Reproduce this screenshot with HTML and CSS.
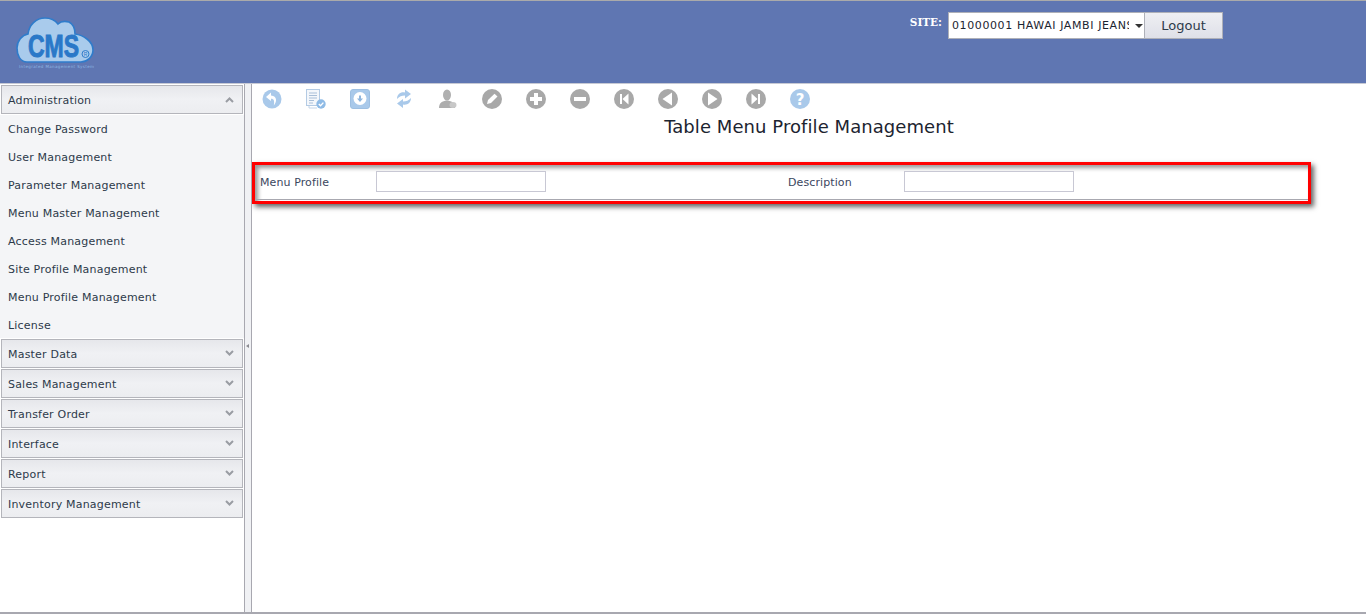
FILE: index.html
```html
<!DOCTYPE html>
<html lang="en">
<head>
    <meta charset="UTF-8">
    <meta name="viewport" content="width=device-width, initial-scale=1.0">
    <title>Table Menu Profile Management</title>
    <link rel="stylesheet" href="styles.css">
</head>
<body>

<div class="header">
    <svg class="logo" width="80" height="58" viewBox="0 0 80 58">
        <path d="M12 45 C5 45 2 38 2 31 C2 24 7 18 13 17 C14 8 21 1 30 1 C36 1 40 3 43 7 C46 4 50 4 54 5 C58 7 60 12 60 17 C68 18 78 24 78 33 C78 40 72 45 66 45 Z" fill="#a9cbec" stroke="#2f7ccb" stroke-width="1.6"/>
        <text class="logo-text" transform="translate(13 40) scale(1 1.35)">CMS</text>
        <circle cx="70.5" cy="37" r="3.5" fill="none" stroke="#2f7ccb" stroke-width="1"/>
        <text class="logo-reg" x="70.5" y="39">R</text>
        <text class="logo-sub" x="4" y="51" textLength="75" lengthAdjust="spacing">Integrated Management System</text>
    </svg>
    <div class="site-box">
        <span class="site-label">SITE:</span>
        <div class="site-select">
            <select>
                <option>01000001 HAWAI JAMBI JEANS STORE</option>
            </select>
        </div>
        <button class="logout">Logout</button>
    </div>
</div>

<div class="main">
    <div class="sidebar">
        <div class="acc-head">Administration <svg class="chev" width="9" height="7" viewBox="0 0 9 7"><path d="M1 6 L4.5 2.5 L8 6" fill="none" stroke="#9a9da3" stroke-width="2"/></svg></div>
        <ul class="acc-list">
            <li>Change Password</li>
            <li>User Management</li>
            <li>Parameter Management</li>
            <li>Menu Master Management</li>
            <li>Access Management</li>
            <li>Site Profile Management</li>
            <li>Menu Profile Management</li>
            <li>License</li>
        </ul>
        <div class="acc-head">Master Data <svg class="chev" width="9" height="7" viewBox="0 0 9 7"><path d="M1 1 L4.5 4.5 L8 1" fill="none" stroke="#9a9da3" stroke-width="2"/></svg></div>
        <div class="acc-head">Sales Management <svg class="chev" width="9" height="7" viewBox="0 0 9 7"><path d="M1 1 L4.5 4.5 L8 1" fill="none" stroke="#9a9da3" stroke-width="2"/></svg></div>
        <div class="acc-head">Transfer Order <svg class="chev" width="9" height="7" viewBox="0 0 9 7"><path d="M1 1 L4.5 4.5 L8 1" fill="none" stroke="#9a9da3" stroke-width="2"/></svg></div>
        <div class="acc-head">Interface <svg class="chev" width="9" height="7" viewBox="0 0 9 7"><path d="M1 1 L4.5 4.5 L8 1" fill="none" stroke="#9a9da3" stroke-width="2"/></svg></div>
        <div class="acc-head">Report <svg class="chev" width="9" height="7" viewBox="0 0 9 7"><path d="M1 1 L4.5 4.5 L8 1" fill="none" stroke="#9a9da3" stroke-width="2"/></svg></div>
        <div class="acc-head">Inventory Management <svg class="chev" width="9" height="7" viewBox="0 0 9 7"><path d="M1 1 L4.5 4.5 L8 1" fill="none" stroke="#9a9da3" stroke-width="2"/></svg></div>
    </div>

    <div class="splitter"><span class="split-arrow"></span></div>

    <div class="content">
        <div class="toolbar">
            <!-- back -->
            <svg width="20" height="20" viewBox="0 0 20 20"><circle cx="10" cy="10" r="9.5" fill="#a9c9ea"/><path d="M9 3.5 L4 8 L9 12 V9.8 C11.5 9.6 12.8 11.5 11.8 16.5 C15 13 15.5 7 9 6.5 Z" fill="#fff"/></svg>
            <!-- document check -->
            <svg width="20" height="20" viewBox="0 0 20 20"><rect x="0.5" y="0.5" width="13" height="16" fill="#f4f7fb" stroke="#b4cbe4"/><path d="M3 4 H11 M3 6.5 H11 M3 9 H11 M3 11.5 H8 M3 14 H7" stroke="#a9bfd8"/><path d="M3 17 V19 H11" fill="none" stroke="#c3d4e8"/><circle cx="15" cy="15" r="4.7" fill="#8fbbe6"/><path d="M12.8 15 L14.5 16.8 L17.4 13.6" fill="none" stroke="#fff" stroke-width="1.4"/></svg>
            <!-- save -->
            <svg width="20" height="20" viewBox="0 0 20 20"><rect x="0.5" y="0.5" width="19" height="19" rx="2.5" fill="#a9c9ea" stroke="#9dbfe2"/><circle cx="10" cy="9.5" r="6.5" fill="#fff"/><path d="M9 6.5 H11 V9.5 H13 L10 13 L7 9.5 H9 Z" fill="#8fb6de"/></svg>
            <!-- refresh -->
            <svg width="20" height="20" viewBox="0 0 20 20"><path d="M3 10 C3 5 7 2.5 11 3.5 V0.5 L17 5 L11 9.5 V6.5 C8 6.5 5 7.5 3 10 Z" fill="#a9c9ea"/><path d="M17 9 C17 14 13 16.5 9 15.5 V19 L3 14.5 L9 10 V12.5 C12 12.5 15 11.5 17 9 Z" fill="#a9c9ea"/></svg>
            <!-- user -->
            <svg width="20" height="20" viewBox="0 0 20 20"><ellipse cx="9" cy="6" rx="4" ry="5.5" fill="#b0b0b0"/><path d="M1 19 C1 14 4 12 9 11.5 C14 12 17 14 17 19 Z" fill="#adadad"/><ellipse cx="15" cy="16" rx="3.5" ry="3" fill="#c8c8c8"/></svg>
            <!-- edit -->
            <svg width="20" height="20" viewBox="0 0 20 20"><circle cx="10" cy="10" r="10" fill="#a8a8a8"/><path d="M5 15 L6 11 L12.5 4.7 L15.5 7.5 L9 14 Z" fill="#fff"/></svg>
            <!-- add -->
            <svg width="20" height="20" viewBox="0 0 20 20"><circle cx="10" cy="10" r="10" fill="#a8a8a8"/><path d="M8 4 H12 V8 H16 V12 H12 V16 H8 V12 H4 V8 H8 Z" fill="#fff"/></svg>
            <!-- remove -->
            <svg width="20" height="20" viewBox="0 0 20 20"><circle cx="10" cy="10" r="10" fill="#a8a8a8"/><rect x="4" y="8" width="12" height="4" fill="#fff"/></svg>
            <!-- first -->
            <svg width="20" height="20" viewBox="0 0 20 20"><circle cx="10" cy="10" r="10" fill="#a8a8a8"/><path d="M6 5 H8 V15 H6 Z M14.5 4.5 V15.5 L8.5 10 Z" fill="#fff"/></svg>
            <!-- prev -->
            <svg width="20" height="20" viewBox="0 0 20 20"><circle cx="10" cy="10" r="10" fill="#a8a8a8"/><path d="M14 3.5 V16.5 L4.5 10 Z" fill="#fff"/></svg>
            <!-- next -->
            <svg width="20" height="20" viewBox="0 0 20 20"><circle cx="10" cy="10" r="10" fill="#a8a8a8"/><path d="M6 3.5 V16.5 L15.5 10 Z" fill="#fff"/></svg>
            <!-- last -->
            <svg width="20" height="20" viewBox="0 0 20 20"><circle cx="10" cy="10" r="10" fill="#a8a8a8"/><path d="M5.5 4.5 V15.5 L11.5 10 Z M12 5 H14 V15 H12 Z" fill="#fff"/></svg>
            <!-- help -->
            <svg width="20" height="20" viewBox="0 0 20 20"><circle cx="10" cy="10" r="10" fill="#a9c9ea"/><text class="help-mark" x="10" y="15.5">?</text></svg>
        </div>

        <div class="title">Table Menu Profile Management</div>

        <div class="filter-box">
            <div class="filter-row">
                <div class="field">
                    <label for="menu_profile">Menu Profile</label>
                    <input type="text" id="menu_profile">
                </div>
                <div class="field">
                    <label for="description">Description</label>
                    <input type="text" id="description">
                </div>
            </div>
        </div>
    </div>
</div>

</body>
</html>
```
FILE: styles.css
```css
html, body {
    height: 100%;
}
body {
    font-family: "DejaVu Sans", Verdana, sans-serif;
    font-size: 11px;
    color: #2d3a4a;
    background-color: #fff;
    margin: 0;
    overflow: hidden;
    display: flex;
    flex-direction: column;
}
.header {
    height: 84px;
    flex-shrink: 0;
    box-sizing: border-box;
    background-color: #5f76b2;
    border-top: 1px solid #aaa;
    border-bottom: 1px solid #c6c9d4;
    display: flex;
    justify-content: space-between;
    padding: 16px 143px 0 15px;
}
.logo {
    display: block;
}
.logo-text {
    font-family: "Liberation Sans", Arial, sans-serif;
    font-weight: bold;
    font-size: 23px;
    fill: #2a78c8;
    stroke: #2a78c8;
    stroke-width: 0.7;
}
.logo-reg {
    font-family: "Liberation Sans", Arial, sans-serif;
    font-size: 5px;
    fill: #2a78c8;
    text-anchor: middle;
}
.logo-sub {
    font-family: "DejaVu Sans", sans-serif;
    font-size: 4px;
    fill: #8eb6e4;
}
.site-box {
    display: flex;
    align-items: flex-start;
    margin-top: -5px;
}
.site-label {
    font-family: "DejaVu Serif", serif;
    font-weight: bold;
    font-size: 10.5px;
    color: #fff;
    margin: 4px 6px 0 0;
}
.site-select {
    width: 197px;
    height: 27px;
    box-sizing: border-box;
    background-color: #fff;
    border: 1px solid #aeb0b8;
    position: relative;
}
.site-select::after {
    content: "";
    position: absolute;
    right: 1px;
    top: 11px;
    border-left: 4px solid transparent;
    border-right: 4px solid transparent;
    border-top: 4px solid #333;
}
.site-select select {
    appearance: none;
    width: 180px;
    height: 25px;
    border: 0;
    outline: 0;
    padding: 0 0 0 3px;
    background: transparent;
    font-family: inherit;
    font-size: 11px;
    letter-spacing: 0.6px;
    color: #1c2430;
}
.logout {
    width: 78px;
    height: 27px;
    margin-left: 0;
    border: 1px solid #aeb0b8;
    border-left: 0;
    background: linear-gradient(#eeeff3, #dfe0e8);
    font-family: inherit;
    font-size: 13px;
    color: #2d3a4a;
    padding: 0;
}
.main {
    flex: 1;
    min-height: 0;
    display: flex;
    border-bottom: 2px solid #a8a8b0;
}
.sidebar {
    width: 244px;
    flex-shrink: 0;
    box-sizing: border-box;
    padding: 1px 1px 0 1px;
}
.acc-head {
    height: 29px;
    box-sizing: border-box;
    border: 1px solid #b4b5bb;
    background: linear-gradient(#e6e7eb, #f0f1f4 50%, #ecedf0);
    display: flex;
    justify-content: space-between;
    align-items: center;
    padding: 2px 8px 0 6px;
    margin-bottom: 1px;
    letter-spacing: 0.2px;
}
.chev {
    display: block;
    margin-top: -3px;
}
.acc-list {
    list-style: none;
    margin: 0 -1px 1px -1px;
    padding: 1px 0 0 0;
    height: 223px;
    box-sizing: border-box;
    background-color: #f4f5f7;
}
.acc-list li {
    height: 28px;
    line-height: 28px;
    padding-left: 8px;
    letter-spacing: 0.2px;
}
.splitter {
    width: 8px;
    flex-shrink: 0;
    box-sizing: border-box;
    background-color: #f0f1f4;
    border-left: 1px solid #a8a8b0;
    border-right: 1px solid #a8a8b0;
    position: relative;
}
.split-arrow {
    position: absolute;
    left: 1px;
    top: 260px;
    border-top: 2px solid transparent;
    border-bottom: 2px solid transparent;
    border-right: 3px solid #8a8a90;
}
.content {
    flex: 1;
    min-width: 0;
}
.toolbar {
    display: flex;
    gap: 24px;
    padding: 5px 0 0 10px;
    height: 20px;
}
.toolbar svg {
    display: block;
    flex-shrink: 0;
}
.help-mark {
    font-family: "DejaVu Sans", sans-serif;
    font-weight: bold;
    font-size: 15px;
    fill: #fff;
    text-anchor: middle;
}
.title {
    text-align: center;
    font-size: 18px;
    line-height: 22px;
    margin-top: 7px;
    letter-spacing: 0.07px;
    color: #1c2430;
}
.filter-box {
    width: 1059px;
    height: 42px;
    box-sizing: border-box;
    margin: 24px 0 0 0;
    border: 3px solid #f00;
    box-shadow: 3px 3px 5px #666, inset 3px 3px 4px #999;
}
.filter-row {
    height: 34px;
    border-bottom: 1px solid #a8a8b0;
    display: flex;
    padding-left: 5px;
}
.field {
    width: 528px;
    flex-shrink: 0;
    display: flex;
    align-items: center;
}
.field label {
    width: 116px;
    letter-spacing: 0.1px;
    color: #3b4660;
}
.field input {
    width: 170px;
    height: 21px;
    box-sizing: border-box;
    border: 1px solid #c8c8d4;
    padding: 0 4px;
    outline: 0;
    margin-top: -2px;
}
```
